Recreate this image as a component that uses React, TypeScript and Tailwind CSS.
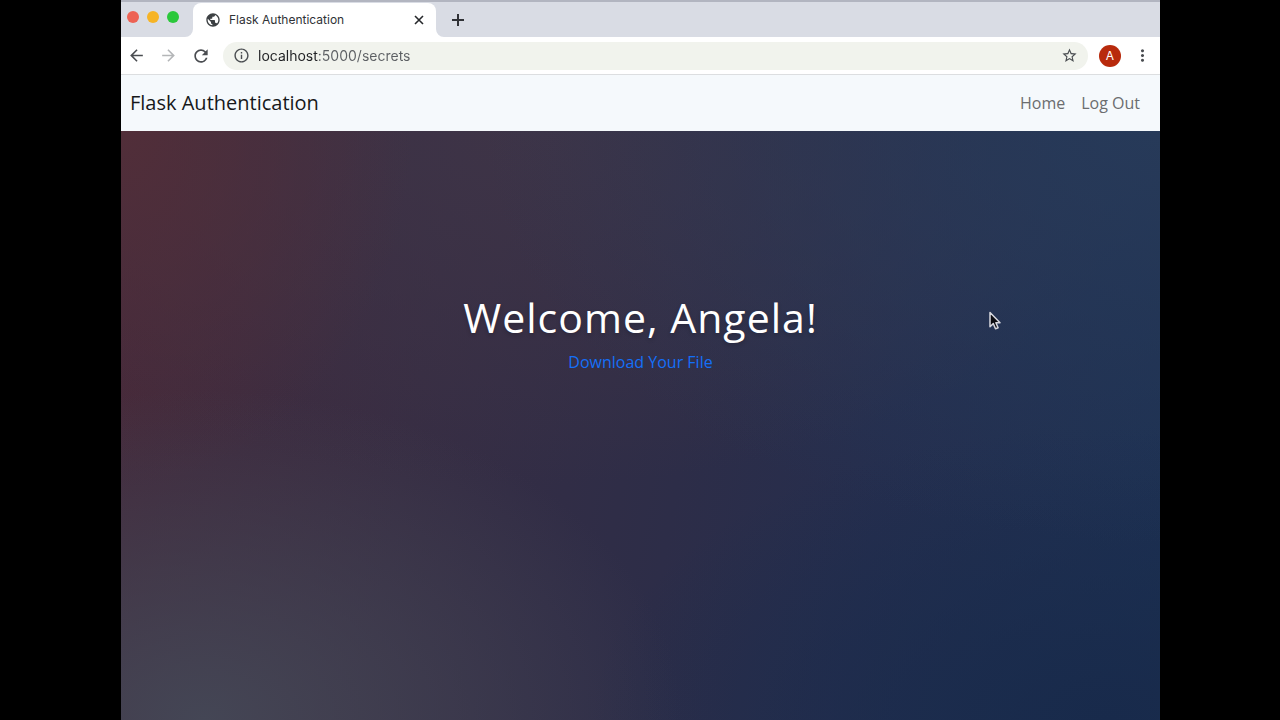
import React from "react";
import {
  MdArrowBack,
  MdArrowForward,
  MdInfoOutline,
  MdMoreVert,
  MdPublic,
  MdRefresh,
  MdStarBorder,
} from "react-icons/md";

function TabCurve({ side }: { side: "left" | "right" }) {
  return (
    <svg viewBox="0 0 8 8" className="size-2 self-end text-white" aria-hidden="true">
      <path d={side === "left" ? "M8 0v8H0a8 8 0 0 0 8-8z" : "M0 0v8h8a8 8 0 0 1-8-8z"} fill="currentColor" />
    </svg>
  );
}

function TabStrip() {
  return (
    <div className="flex h-[37px] border-t-2 border-[#b2b5c0] bg-[#d9dce4]">
      <div className="flex w-16 items-start gap-2 pt-[9px] pl-[6px]">
        <button aria-label="Close window" className="size-3 shrink-0 rounded-full bg-[#ed6254]" />
        <button aria-label="Minimize window" className="size-3 shrink-0 rounded-full bg-[#f6b426]" />
        <button aria-label="Full screen" className="size-3 shrink-0 rounded-full bg-[#2bc83b]" />
      </div>
      <TabCurve side="left" />
      <div className="mt-px flex w-[243px] items-center gap-2 rounded-t-lg bg-white pr-3 pl-3 text-[#3c4043]">
        <MdPublic className="size-4" />
        <span className="flex-1 text-[12px] text-[#303236]">Flask Authentication</span>
        <button aria-label="Close tab">
          <svg viewBox="0 0 10 10" className="size-[10px]" aria-hidden="true">
            <path d="M1 1l8 8M9 1L1 9" stroke="#26282b" strokeWidth="1.6" />
          </svg>
        </button>
      </div>
      <TabCurve side="right" />
      <button aria-label="New tab" className="px-2">
        <svg viewBox="0 0 12 12" className="size-3" aria-hidden="true">
          <path d="M6 0v12M0 6h12" stroke="#303236" strokeWidth="2" />
        </svg>
      </button>
    </div>
  );
}

function Toolbar() {
  return (
    <div className="flex h-[38px] items-center border-b border-[#dcdee0] bg-white pr-2 pl-[6px] text-[#4a4d51]">
      <div className="flex gap-[13px]">
        <button aria-label="Back">
          <MdArrowBack className="size-[19px]" />
        </button>
        <button aria-label="Forward" className="text-[#b4b6b8]">
          <MdArrowForward className="size-[19px]" />
        </button>
        <button aria-label="Reload">
          <MdRefresh className="size-[20px]" />
        </button>
      </div>
      <div className="ml-3 flex h-7 flex-1 items-center gap-2 rounded-full bg-[#f1f3ed] px-[10px]">
        <MdInfoOutline className="size-[17px]" />
        <input
          aria-label="Address"
          defaultValue="localhost:5000/secrets"
          className="min-w-0 flex-1 bg-linear-to-r from-[#202124] from-[61px] to-[#5c5f63] to-[61px] bg-clip-text text-[14px] text-transparent caret-black outline-none"
        />
        <button aria-label="Bookmark this page">
          <MdStarBorder className="size-[17px]" />
        </button>
      </div>
      <button
        aria-label="Profile"
        className="ml-[11px] size-[22px] rounded-full bg-[#b82a0c] text-center text-[12px] text-white"
      >
        A
      </button>
      <button aria-label="Menu" className="ml-3">
        <MdMoreVert className="size-[19px]" />
      </button>
    </div>
  );
}

function Navbar() {
  return (
    <nav className="flex h-14 items-center justify-between bg-[#f5f9fc] pr-5 pl-[9px] font-['Open_Sans',sans-serif]">
      <a href="#top" className="text-[20px] text-[#16181a]">
        Flask Authentication
      </a>
      <div className="flex gap-4 text-[16px] text-[#6b6d6f]">
        <a href="#home">Home</a>
        <a href="#logout">Log Out</a>
      </div>
    </nav>
  );
}

function Pointer() {
  return (
    <svg viewBox="0 0 12 20" className="absolute top-[180px] right-[159px] h-5 w-3" aria-hidden="true">
      <path
        d="M1 1.5v14.2l3.3-3.1 2.2 5.2 2.6-1.1-2.2-5H11z"
        fill="#0b0b10"
        stroke="#d8d8de"
        strokeWidth="1.5"
        strokeLinejoin="round"
      />
    </svg>
  );
}

export default function App() {
  return (
    <div className="flex min-h-screen bg-black px-[120px] font-[Inter,sans-serif]">
      <div className="flex flex-1 flex-col border-l border-black">
        <TabStrip />
        <Toolbar />
        <Navbar />
        <main className="relative flex flex-1 flex-col items-center bg-[radial-gradient(ellipse_46%_56%_at_8%_100%,#444655,transparent),radial-gradient(ellipse_28%_60%_at_0%_0%,#512e39,transparent),radial-gradient(ellipse_65%_70%_at_100%_0%,#273a59,transparent),radial-gradient(ellipse_50%_50%_at_95%_100%,#182a4b,transparent),radial-gradient(ellipse_60%_60%_at_40%_0%,#3e3447,transparent),linear-gradient(100deg,#45293a,#372d43_30%,#2d2d48_54%,#252e4e_72%,#1c3153)] pt-[160px] font-['Open_Sans',sans-serif]">
          <h1 className="text-[41px] leading-[52px] tracking-wide text-white text-shadow-[0_2px_4px_rgba(0,0,0,0.2)]">
            Welcome, Angela!
          </h1>
          <a href="#download" className="mt-[7px] text-[16px] leading-6 text-[#146ff8]">
            Download Your File
          </a>
          <Pointer />
        </main>
      </div>
    </div>
  );
}
